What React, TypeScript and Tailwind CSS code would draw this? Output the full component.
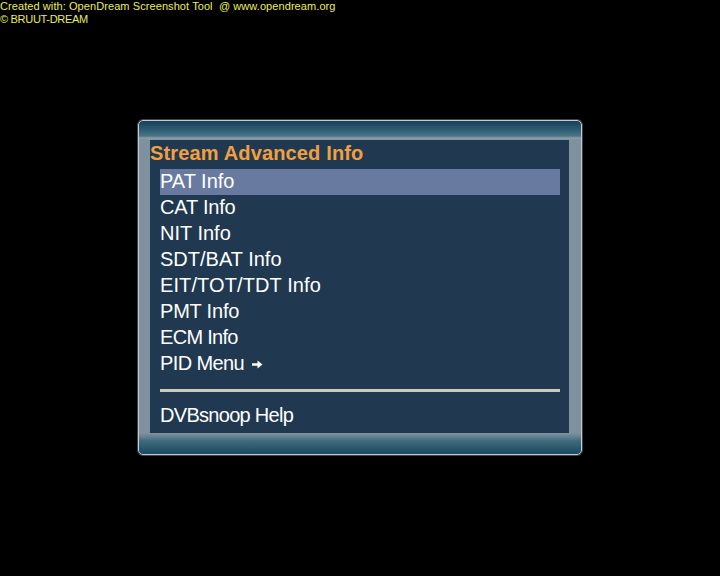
const items: { label: string; track?: string }[] = [
  { label: "PAT Info" },
  { label: "CAT Info", track: "tracking-[-0.2px]" },
  { label: "NIT Info" },
  { label: "SDT/BAT Info" },
  { label: "EIT/TOT/TDT Info", track: "tracking-[0.1px]" },
  { label: "PMT Info", track: "tracking-[-0.2px]" },
  { label: "ECM Info", track: "tracking-[-0.7px]" },
];

function Arrow() {
  return (
    <svg width="11" height="9" viewBox="0 0 11 9" className="ml-[8px] mt-[1px]">
      <path d="M0 3.2h5.5V0.5L10.5 4.5L5.5 8.5V5.8H0z" fill="#ffffff" />
    </svg>
  );
}

function Row({
  label,
  selected,
  arrow,
  track,
}: {
  label: string;
  selected?: boolean;
  arrow?: boolean;
  track?: string;
}) {
  return (
    <div
      className={
        "flex h-[26px] items-center text-[20px] leading-[26px] text-white " +
        (selected ? "bg-[#687aa0]" : "")
      }
    >
      <span className={"-mt-[2px] " + (track ?? "")}>{label}</span>
      {arrow && <Arrow />}
    </div>
  );
}

export default function App() {
  return (
    <div className="flex h-[576px] w-[720px] flex-col bg-black font-['Liberation_Sans',Arial,sans-serif]">
      <div className="h-[26px] text-[11px] leading-[13px] tracking-[0.08px] text-[#ecec5c]">
        <div>Created with: OpenDream Screenshot Tool&nbsp; @ www.opendream.org</div>
        <div className="tracking-[-0.3px]">© BRUUT-DREAM</div>
      </div>

      <div className="ml-[138px] mt-[94px] h-[335px] w-[444px] rounded-[5px] border border-[#c4ccd0] bg-[linear-gradient(to_bottom,#16405a_0px,#2c5a70_8px,#4a7588_15px,#8a9eac_17px,#7f919e_19px,#7f919e_312px,#6a8494_315px,#3f6a7e_320px,#1d4b5f_332px)] pb-[21px] pl-[11px] pr-[12px] pt-[19px] shadow-[0_0_0_1px_#3a4448]">
        <div className="h-full w-full bg-[#203850] pr-[9px]">
          <div className="h-[29px] pt-[1px] text-[20px] font-bold leading-[24px] tracking-[0.15px] text-[#f0a040]">
            Stream Advanced Info
          </div>
          <div className="pl-[10px]">
            {items.map((it, i) => (
              <Row key={it.label} label={it.label} track={it.track} selected={i === 0} />
            ))}
            <Row label="PID Menu" arrow track="tracking-[-0.6px]" />
            <div className="mt-[12px] h-[3px] bg-[#c8ccc0]" />
            <div className="mt-[11px]">
              <Row label="DVBsnoop Help" track="tracking-[-0.7px]" />
            </div>
          </div>
        </div>
      </div>
    </div>
  );
}
